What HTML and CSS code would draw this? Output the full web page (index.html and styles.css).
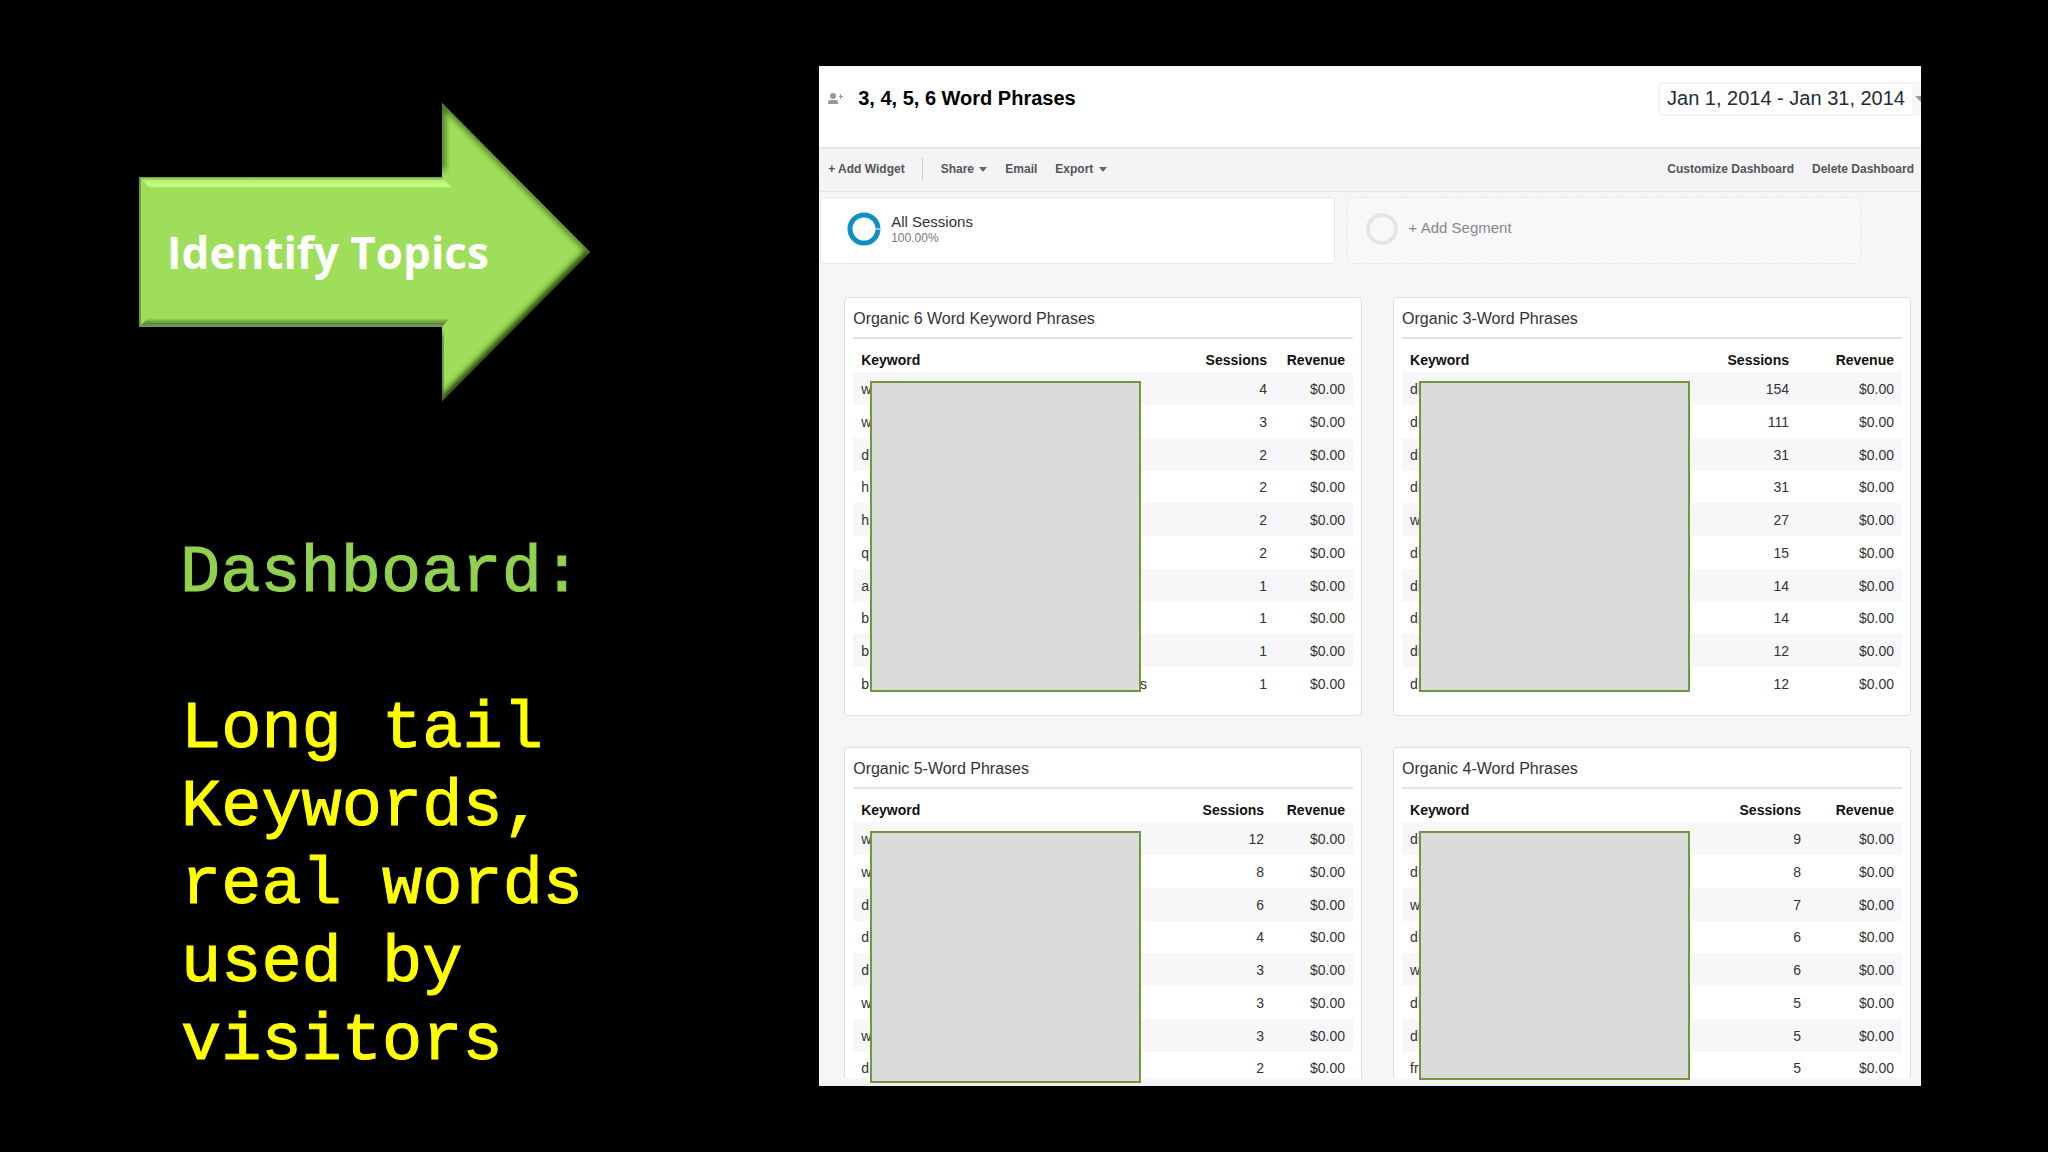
FILE: index.html
```html
<!DOCTYPE html>
<html lang="en">
<head>
    <meta charset="UTF-8">
    <meta name="viewport" content="width=device-width, initial-scale=1.0">
    <title>Identify Topics</title>
    <link rel="stylesheet" href="styles.css">
</head>
<body>
  <div class="slide">
    <section class="intro">
      <div class="arrow">
        <svg viewBox="0 0 452 300" aria-hidden="true">
          <defs>
            <clipPath id="arrowShape">
              <polygon points="0,75 303,75 303,1 451,150 303,299 303,225 0,225"/>
            </clipPath>
            <filter id="soft" x="-10%" y="-10%" width="120%" height="120%">
              <feGaussianBlur stdDeviation="3"/>
            </filter>
            <linearGradient id="topEdge" x1="0" y1="0" x2="0" y2="1">
              <stop offset="0" stop-color="#6f9c3c"/>
              <stop offset="0.3" stop-color="#b4f070"/>
              <stop offset="0.8" stop-color="#c8ff84"/>
              <stop offset="1" stop-color="#9ede5b"/>
            </linearGradient>
            <linearGradient id="bottomEdge" x1="0" y1="0" x2="0" y2="1">
              <stop offset="0" stop-color="#9ede5b"/>
              <stop offset="0.6" stop-color="#5f8a36"/>
              <stop offset="1" stop-color="#7c9a60"/>
            </linearGradient>
          </defs>
          <g clip-path="url(#arrowShape)">
            <rect width="452" height="300" fill="#9ede5b"/>
            <polyline points="303,68 303,0 452,150" fill="none" stroke="#3f6418" stroke-width="6" filter="url(#soft)"/>
            <polyline points="452,150 303,300" fill="none" stroke="#1d3800" stroke-width="9" filter="url(#soft)"/>
            <polyline points="303,300 304,232" fill="none" stroke="#3f6418" stroke-width="5" filter="url(#soft)"/>
            <polyline points="0,70 0,230 1,230" fill="none" stroke="#3f6418" stroke-width="5" filter="url(#soft)"/>
            <polygon points="0,75 303,75 313,86 11,86" fill="url(#topEdge)"/>
            <polygon points="0,225 303,225 311,216 9,216" fill="url(#bottomEdge)"/>
          </g>
        </svg>
        <span class="arrow-label">Identify Topics</span>
      </div>
      <h1>Dashboard:</h1>
      <p class="message">Long tail<br>Keywords,<br>real words<br>used by<br>visitors</p>
    </section>

    <main class="panel">
      <header class="panel-header">
        <svg class="person" viewBox="0 0 15 11" aria-hidden="true">
          <circle cx="5" cy="3" r="3"/>
          <path d="M0 11V9q0-2 3-2h4q3 0 3 2v2z"/>
          <path d="M11 3h1V1h1v2h2v1h-2v2h-1V4h-1z"/>
        </svg>
        <h2>3, 4, 5, 6 Word Phrases</h2>
        <button class="date-range" type="button">
          <span class="date-text">Jan 1, 2014 - Jan 31, 2014</span>
          <span class="date-arrow"><span class="caret"></span></span>
        </button>
      </header>

      <nav class="toolbar">
        <button type="button" class="add-widget">+ Add Widget</button>
        <button type="button">Share <span class="caret"></span></button>
        <button type="button">Email</button>
        <button type="button">Export <span class="caret"></span></button>
        <button type="button" class="customize">Customize Dashboard</button>
        <button type="button">Delete Dashboard</button>
      </nav>

      <div class="segments">
        <div class="segment">
          <svg class="ring" viewBox="0 0 34 34" aria-hidden="true">
            <circle cx="17" cy="17" r="14" fill="none" stroke="#0f8fc6" stroke-width="5"/>
            <path d="M28 17h6" stroke="#fff"/>
          </svg>
          <div>
            <div class="segment-name">All Sessions</div>
            <div class="segment-share">100.00%</div>
          </div>
        </div>
        <button type="button" class="segment segment-add">
          <svg class="ring" viewBox="0 0 34 34" aria-hidden="true">
            <circle cx="17" cy="17" r="14" fill="none" stroke="#e5e4e7" stroke-width="4"/>
            <path d="M28 17h6" stroke="#f6f5f8"/>
          </svg>
          <span>+ Add Segment</span>
        </button>
      </div>

      <div class="widgets">
        <section class="widget six-word">
          <h3>Organic 6 Word Keyword Phrases</h3>
          <table>
            <thead>
              <tr><th>Keyword</th><th>Sessions</th><th class="revenue">Revenue</th></tr>
            </thead>
            <tbody>
              <tr><td>w</td><td>4</td><td>$0.00</td></tr>
              <tr><td>w</td><td>3</td><td>$0.00</td></tr>
              <tr><td>d</td><td>2</td><td>$0.00</td></tr>
              <tr><td>h</td><td>2</td><td>$0.00</td></tr>
              <tr><td>h</td><td>2</td><td>$0.00</td></tr>
              <tr><td>q</td><td>2</td><td>$0.00</td></tr>
              <tr><td>a</td><td>1</td><td>$0.00</td></tr>
              <tr><td>b</td><td>1</td><td>$0.00</td></tr>
              <tr><td>b</td><td>1</td><td>$0.00</td></tr>
              <tr><td>b<span class="tail">s</span></td><td>1</td><td>$0.00</td></tr>
            </tbody>
          </table>
          <div class="cover"></div>
        </section>

        <section class="widget three-word">
          <h3>Organic 3-Word Phrases</h3>
          <table>
            <thead>
              <tr><th>Keyword</th><th>Sessions</th><th class="revenue">Revenue</th></tr>
            </thead>
            <tbody>
              <tr><td>di</td><td>154</td><td>$0.00</td></tr>
              <tr><td>di</td><td>111</td><td>$0.00</td></tr>
              <tr><td>di</td><td>31</td><td>$0.00</td></tr>
              <tr><td>di</td><td>31</td><td>$0.00</td></tr>
              <tr><td>w</td><td>27</td><td>$0.00</td></tr>
              <tr><td>di</td><td>15</td><td>$0.00</td></tr>
              <tr><td>di</td><td>14</td><td>$0.00</td></tr>
              <tr><td>di</td><td>14</td><td>$0.00</td></tr>
              <tr><td>di</td><td>12</td><td>$0.00</td></tr>
              <tr><td>di</td><td>12</td><td>$0.00</td></tr>
            </tbody>
          </table>
          <div class="cover"></div>
        </section>

        <section class="widget cut five-word">
          <h3>Organic 5-Word Phrases</h3>
          <table>
            <thead>
              <tr><th>Keyword</th><th>Sessions</th><th class="revenue">Revenue</th></tr>
            </thead>
            <tbody>
              <tr><td>w</td><td>12</td><td>$0.00</td></tr>
              <tr><td>w</td><td>8</td><td>$0.00</td></tr>
              <tr><td>d</td><td>6</td><td>$0.00</td></tr>
              <tr><td>d</td><td>4</td><td>$0.00</td></tr>
              <tr><td>d</td><td>3</td><td>$0.00</td></tr>
              <tr><td>w</td><td>3</td><td>$0.00</td></tr>
              <tr><td>w</td><td>3</td><td>$0.00</td></tr>
              <tr><td>d</td><td>2</td><td>$0.00</td></tr>
            </tbody>
          </table>
          <div class="cover"></div>
        </section>

        <section class="widget cut four-word">
          <h3>Organic 4-Word Phrases</h3>
          <table>
            <thead>
              <tr><th>Keyword</th><th>Sessions</th><th class="revenue">Revenue</th></tr>
            </thead>
            <tbody>
              <tr><td>di</td><td>9</td><td>$0.00</td></tr>
              <tr><td>di</td><td>8</td><td>$0.00</td></tr>
              <tr><td>w</td><td>7</td><td>$0.00</td></tr>
              <tr><td>di</td><td>6</td><td>$0.00</td></tr>
              <tr><td>w</td><td>6</td><td>$0.00</td></tr>
              <tr><td>di</td><td>5</td><td>$0.00</td></tr>
              <tr><td>di</td><td>5</td><td>$0.00</td></tr>
              <tr><td>fr</td><td>5</td><td>$0.00</td></tr>
            </tbody>
          </table>
          <div class="cover"></div>
        </section>
      </div>
    </main>
  </div>
</body>
</html>
```
FILE: styles.css
```css
* {
    box-sizing: border-box;
}
body {
    margin: 0;
    background-color: #000;
    font-family: "Liberation Sans", Arial, sans-serif;
    color: #333;
}
h1, h2, h3, p {
    margin: 0;
    font-weight: normal;
}
button {
    padding: 0;
    border: none;
    background: none;
    font: inherit;
    color: inherit;
    cursor: pointer;
}
.slide {
    display: flex;
    align-items: flex-start;
    min-height: 100vh;
    padding: 66px 127px 66px 0;
}

/* left column */
.intro {
    flex: none;
    width: 40vw;
    padding-top: 36px;
    font-family: "Liberation Mono", Consolas, monospace;
    font-size: 67px;
    line-height: 78px;
}
.arrow {
    display: grid;
    align-items: center;
    width: 452px;
    margin-left: 139px;
}
.arrow svg, .arrow-label {
    grid-area: 1 / 1;
}
.arrow-label {
    padding-left: 28px;
    font-family: "Open Sans", Candara, sans-serif;
    font-size: 44px;
    font-weight: bold;
    line-height: 60px;
    color: #fff;
}
.intro h1 {
    margin: 132px 0 78px 180px;
    font-size: inherit;
    color: #92d050;
    -webkit-text-stroke: 1px #92d050;
}
.message {
    margin-left: 181px;
    color: #ff0;
    -webkit-text-stroke: 1px #ff0;
}

/* dashboard */
.panel {
    position: relative;
    flex: 1;
    min-width: 0;
    padding-bottom: 2px;
    background-color: #f6f5f8;
}
.panel::after {
    content: "";
    position: absolute;
    left: 0;
    right: 0;
    bottom: 0;
    height: 8px;
    background: linear-gradient(#f8f8f9, #ededee);
}
.panel-header {
    display: flex;
    align-items: center;
    height: 81px;
    padding: 0 0 16px 9px;
    background-color: #fff;
}
.person {
    width: 15px;
    height: 11px;
    fill: #999;
}
.panel-header h2 {
    margin-left: 15px;
    font-size: 20px;
    font-weight: bold;
    color: #000;
}
.date-range {
    display: flex;
    align-items: center;
    height: 34px;
    margin-left: auto;
    border: 2px solid #f4f4f6;
    border-right: none;
    border-radius: 5px 0 0 5px;
    font-size: 20px;
    color: #222b3a;
}
.date-text {
    padding: 0 7px;
}
.date-arrow {
    display: flex;
    align-items: center;
    width: 9px;
    height: 30px;
    overflow: hidden;
    background-color: #f6f6f8;
}
.caret {
    display: inline-block;
    border: 4px solid transparent;
    border-top: 5px solid #666;
    border-bottom: none;
}
.date-arrow .caret {
    flex: none;
    margin-left: 3px;
    border-width: 6px 6px 0;
    border-top-color: #999;
}
.toolbar {
    display: flex;
    align-items: center;
    gap: 18px;
    height: 45px;
    padding: 0 7px 3px 9px;
    border-top: 2px solid #e6e5e9;
    border-bottom: 1px solid #e6e5e8;
    background-color: #f4f3f6;
    font-size: 12px;
    font-weight: bold;
    color: #555;
}
.toolbar .caret {
    margin-left: 2px;
    vertical-align: 1px;
}
.add-widget {
    height: 22px;
    padding-right: 17px;
    border-right: 1px solid #ccc;
}
.toolbar .customize {
    margin-left: auto;
}
.segments {
    display: grid;
    grid-template-columns: 1fr 1fr;
    gap: 12px;
    padding: 5px 60px 0 1px;
}
.segment {
    display: flex;
    align-items: center;
    gap: 10px;
    height: 67px;
    padding: 0 0 3px 26px;
    border: 1px solid #e8e7eb;
    border-radius: 3px;
    background-color: #fff;
    font-size: 15px;
    text-align: left;
}
.segment-add {
    padding-left: 17px;
    border: 1px dashed #e6e5e9;
    background-color: #f8f7fa;
    color: #888;
}
.segment-add span {
    padding-bottom: 4px;
}
.ring {
    width: 34px;
    height: 34px;
}
.segment-name {
    line-height: 18px;
}
.segment-share {
    font-size: 12px;
    line-height: 14px;
    color: #777;
}
.widgets {
    display: grid;
    grid-template-columns: 1fr 1fr;
    gap: 31px;
    padding: 33px 10px 0 25px;
}
.widget {
    position: relative;
    padding: 0 8px 15px;
    border: 1px solid #dfdee2;
    border-radius: 4px;
    background-color: #fff;
}
.widget.cut {
    padding-bottom: 0;
    border-bottom: none;
    border-radius: 4px 4px 0 0;
}
.widget h3 {
    height: 41px;
    border-bottom: 2px solid #e4e4e6;
    font-size: 16px;
    line-height: 41px;
}
table {
    width: 100%;
    border-collapse: collapse;
    table-layout: fixed;
    font-size: 14px;
}
th, td {
    height: 33px;
    padding: 0 8px;
    text-align: right;
    white-space: nowrap;
}
th {
    padding-top: 8px;
    color: #111;
}
th:first-child, td:first-child {
    width: 55%;
    text-align: left;
}
tbody tr:nth-child(odd) {
    background-color: #f7f7f9;
}
tbody tr:nth-child(4n) td {
    height: 32px;
}
.six-word .revenue {
    width: 78px;
}
.three-word .revenue {
    width: 105px;
}
.five-word .revenue {
    width: 81px;
}
.four-word .revenue {
    width: 93px;
}
.tail {
    margin-left: 271px;
}
/* hides the keywords */
.cover {
    position: absolute;
    z-index: 1;
    top: 83px;
    left: 25px;
    width: 271px;
    height: 311px;
    border: 2px solid #71983f;
    background-color: #dcdbdb;
}
.five-word .cover {
    height: 252px;
}
.four-word .cover {
    height: 249px;
}
```
